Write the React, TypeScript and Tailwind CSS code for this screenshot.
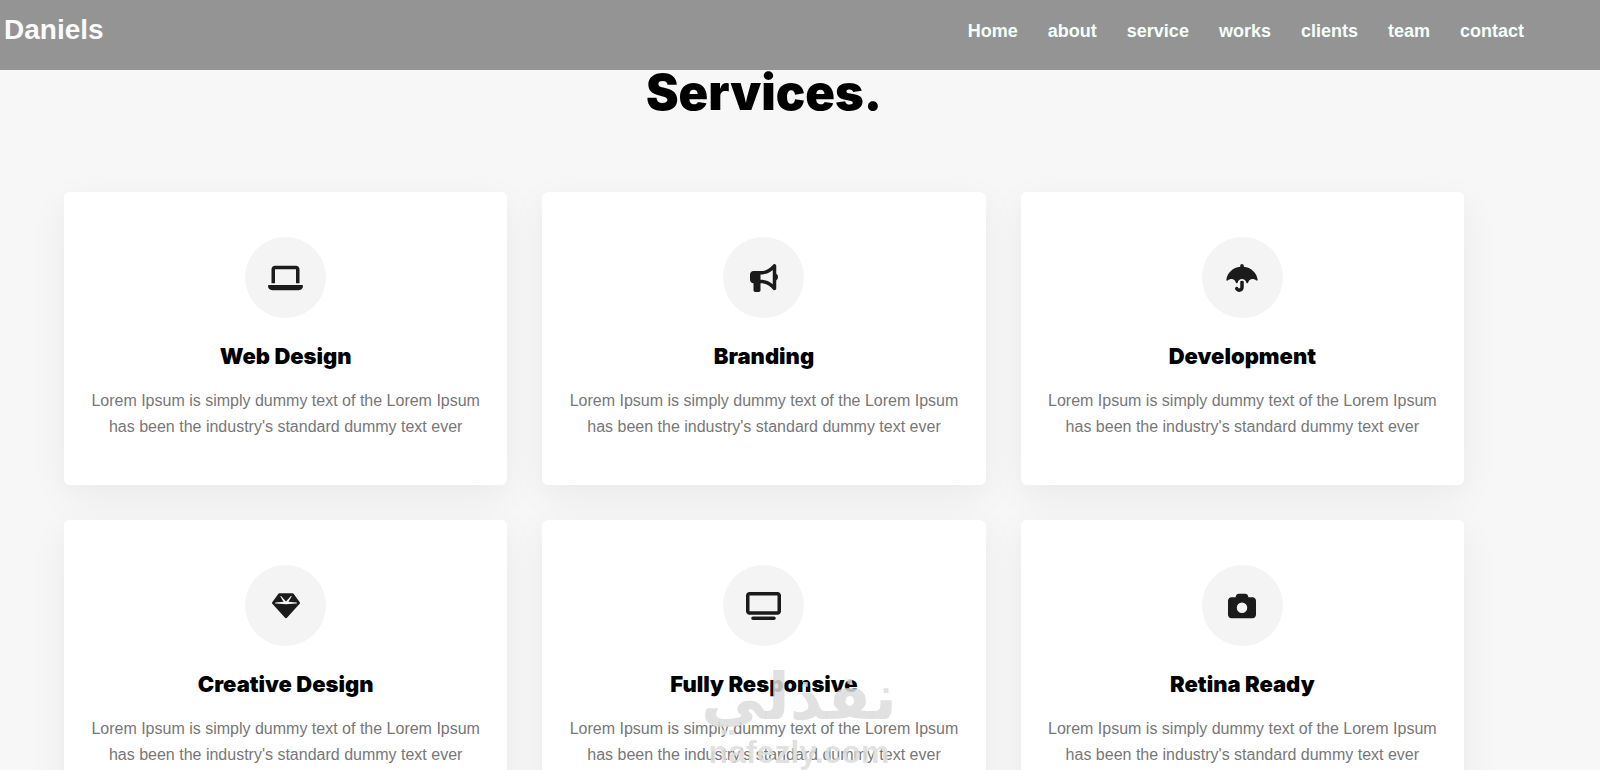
import React from "react";
import type { IconType } from "react-icons";
import {
  FaBullhorn,
  FaCamera,
  FaGem,
  FaLaptop,
  FaTv,
  FaUmbrella,
} from "react-icons/fa6";

interface Service {
  title: string;
  icon: IconType;
  iconWidth: string;
}

const links = ["Home", "about", "service", "works", "clients", "team", "contact"];

// The glyphs share a height but not a width
const services: Service[] = [
  { title: "Web Design", icon: FaLaptop, iconWidth: "w-[35px]" },
  { title: "Branding", icon: FaBullhorn, iconWidth: "w-7" },
  { title: "Development", icon: FaUmbrella, iconWidth: "w-8" },
  { title: "Creative Design", icon: FaGem, iconWidth: "w-7" },
  { title: "Fully Responsive", icon: FaTv, iconWidth: "w-[35px]" },
  { title: "Retina Ready", icon: FaCamera, iconWidth: "w-7" },
];

const Navbar = () => {
  return (
    <header className="fixed inset-x-0 top-0 z-10 flex h-[70px] items-start justify-between bg-[#949494] pt-3 pr-[76px] pl-1 font-bold">
      <a href="#home" className="text-[28px] leading-9 text-[#fafafa]">
        Daniels
      </a>
      <nav className="flex gap-[30px] text-lg leading-[38px] text-[#f5fffa]">
        {links.map((link) => (
          <a key={link} href={`#${link.toLowerCase()}`}>
            {link}
          </a>
        ))}
      </nav>
    </header>
  );
};

const ServiceCard = ({ title, icon: Icon, iconWidth }: Service) => {
  return (
    <article className="flex flex-col items-center rounded-md bg-white px-5 py-[45px] text-center shadow-[0_10px_36px_rgba(0,0,0,0.06)]">
      <div className="mb-[25px] flex size-[81px] items-center justify-center rounded-full bg-[#f4f4f4]">
        <Icon className={`h-7 text-[#1b1b1b] ${iconWidth}`} />
      </div>
      <h3 className="mb-[19px] font-['Arial_Black','Inter',sans-serif] text-[22px] leading-[26px] font-black text-black">
        {title}
      </h3>
      <p className="text-base leading-[26px] text-[#777777]">
        Lorem Ipsum is simply dummy text of the Lorem Ipsum has been the
        industry's standard dummy text ever
      </p>
    </article>
  );
};

// Site stamp that floats over the page
const Watermark = () => {
  return (
    <div className="pointer-events-none fixed bottom-0 left-1/2 z-20 -ml-24 flex h-[110px] w-[190px] flex-col items-center justify-between text-[#dcdcdc]/85">
      <span
        lang="ar"
        dir="rtl"
        className="font-['DejaVu_Sans',sans-serif] text-[64px] leading-[74px] font-bold"
      >
        نفذلي
      </span>
      <span className="text-[32px] leading-[36px] font-bold">nafezly.com</span>
    </div>
  );
};

const App: React.FC = () => {
  return (
    <div className="min-h-screen bg-[#f7f7f7] font-['Liberation_Sans',Arial,sans-serif]">
      <Navbar />
      <main className="mr-[72px] px-16 pt-16 pb-16">
        <h2 className="mb-[70px] text-center font-['Arial_Black','Inter',sans-serif] text-[49px] leading-[58px] font-black text-black">
          Services.
        </h2>
        <div className="grid grid-cols-1 gap-[35px] md:grid-cols-2 lg:grid-cols-3">
          {services.map((service) => (
            <ServiceCard key={service.title} {...service} />
          ))}
        </div>
      </main>
      <Watermark />
    </div>
  );
};

export default App;
